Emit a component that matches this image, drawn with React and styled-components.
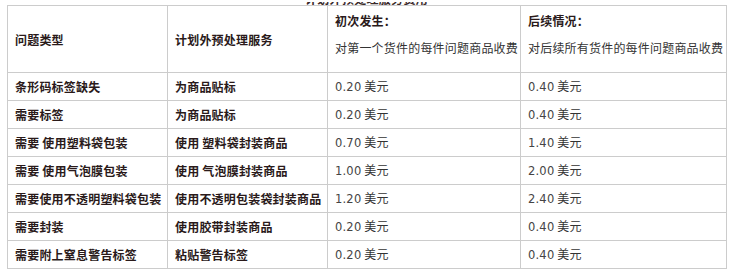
import styled, { createGlobalStyle } from 'styled-components'

const GlobalStyle = createGlobalStyle`
    body {
        margin: 0;
        background: #ffffff;
        font-family: "Noto Sans CJK SC", "DejaVu Sans", sans-serif;
    }
`

const rows = [
    { issue: '条形码标签缺失', service: '为商品贴标', first: '0.20', later: '0.40' },
    { issue: '需要标签', service: '为商品贴标', first: '0.20', later: '0.40' },
    { issue: '需要 使用塑料袋包装', service: '使用 塑料袋封装商品', first: '0.70', later: '1.40' },
    { issue: '需要 使用气泡膜包装', service: '使用 气泡膜封装商品', first: '1.00', later: '2.00' },
    { issue: '需要使用不透明塑料袋包装', service: '使用不透明包装袋封装商品', first: '1.20', later: '2.40' },
    { issue: '需要封装', service: '使用胶带封装商品', first: '0.20', later: '0.40' },
    { issue: '需要附上窒息警告标签', service: '粘贴警告标签', first: '0.20', later: '0.40' },
]

const StyledPage = styled.div`
    width: 735px;
    height: 273px;
    overflow: hidden;
    padding: 2px 0 0 7px;
    box-sizing: border-box;
`

const StyledCaption = styled.div`
    width: 719px;
    height: 3px;
    overflow: hidden;
    display: flex;
    justify-content: center;
    align-items: flex-end;
    font-size: 12px;
    font-weight: 700;
    color: #3a2a2a;
    line-height: 14px;
`

const StyledCaptionText = styled.span`
    margin-bottom: -1px;
    letter-spacing: 0.3px;
`

const StyledTable = styled.table`
    width: 719px;
    border-collapse: collapse;
    table-layout: fixed;
    border: 1px solid #cccccc;
`

const StyledCell = styled.td`
    border: 1px solid #cccccc;
    padding: 0 7px;
    height: 27px;
    font-size: 12px;
    line-height: 15px;
    letter-spacing: 0.2px;
    vertical-align: middle;
    white-space: nowrap;
    color: ${props => (props.$bold ? '#2a1a1a' : '#333333')};
    font-weight: ${props => (props.$bold ? 700 : 400)};
`

const StyledHeadCell = styled(StyledCell).attrs({ as: 'th' })`
    height: 66px;
    text-align: left;
`

const StyledHeadTitle = styled.div`
    font-weight: 700;
    color: #2a1a1a;
    margin-bottom: 12px;
`

const StyledHeadNote = styled.div`
    font-weight: 400;
    color: #333333;
    margin-bottom: 10px;
`

const StyledAmount = styled.span`
    font-family: "DejaVu Sans", sans-serif;
    font-size: 11.5px;
    color: #444444;
`

const Price = ({ value }) => (
    <>
        <StyledAmount>{value}</StyledAmount> 美元
    </>
)

const App = () => {
    return (
        <StyledPage>
            <GlobalStyle />
            <StyledCaption>
                <StyledCaptionText>计划外预处理服务费用</StyledCaptionText>
            </StyledCaption>
            <StyledTable>
                <colgroup>
                    <col style={{ width: 160 }} />
                    <col style={{ width: 160 }} />
                    <col style={{ width: 193 }} />
                    <col style={{ width: 206 }} />
                </colgroup>
                <thead>
                    <tr>
                        <StyledHeadCell $bold>问题类型</StyledHeadCell>
                        <StyledHeadCell $bold>计划外预处理服务</StyledHeadCell>
                        <StyledHeadCell>
                            <StyledHeadTitle>初次发生：</StyledHeadTitle>
                            <StyledHeadNote>对第一个货件的每件问题商品收费</StyledHeadNote>
                        </StyledHeadCell>
                        <StyledHeadCell>
                            <StyledHeadTitle>后续情况：</StyledHeadTitle>
                            <StyledHeadNote>对后续所有货件的每件问题商品收费</StyledHeadNote>
                        </StyledHeadCell>
                    </tr>
                </thead>
                <tbody>
                    {rows.map((row, index) => (
                        <tr key={index}>
                            <StyledCell $bold>{row.issue}</StyledCell>
                            <StyledCell $bold>{row.service}</StyledCell>
                            <StyledCell><Price value={row.first} /></StyledCell>
                            <StyledCell><Price value={row.later} /></StyledCell>
                        </tr>
                    ))}
                </tbody>
            </StyledTable>
        </StyledPage>
    )
}

export default App
